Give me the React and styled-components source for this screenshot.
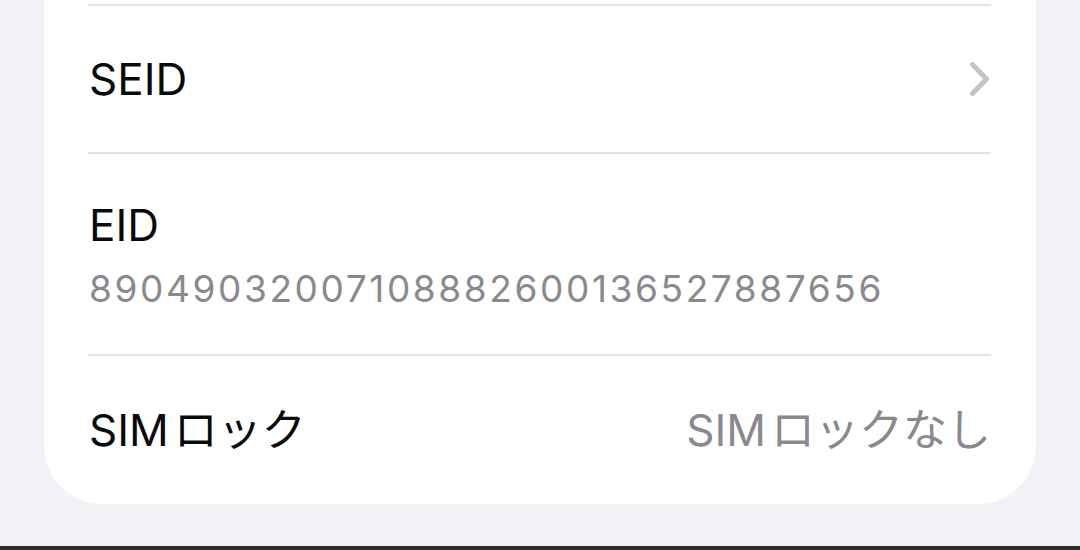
import React from 'react'
import styled, { createGlobalStyle } from 'styled-components'

const Global = createGlobalStyle`
  html, body {
    margin: 0;
    padding: 0;
    background: #f2f2f7;
  }
  body {
    font-family: Inter, "Noto Sans CJK JP", sans-serif;
    -webkit-font-smoothing: antialiased;
  }
`

const Page = styled.div`
  width: 1080px;
  height: 550px;
  display: flex;
  flex-direction: column;
  overflow: hidden;
  background: #f2f2f7;
`

const Scroll = styled.div`
  flex: 1;
  padding: 0 44px;
`

const Card = styled.div`
  background: #fff;
  padding-top: 4px;
  border-radius: 0 0 58px 58px;
`

const Row = styled.div`
  padding: 0 45px 0 44px;
`

const Inner = styled.div`
  border-top: 2px solid #e4e4e7;
  height: ${p => p.$h}px;
  box-sizing: border-box;
  display: flex;
  flex-direction: ${p => (p.$stacked ? 'column' : 'row')};
  align-items: ${p => (p.$stacked ? 'flex-start' : 'center')};
  justify-content: ${p => (p.$stacked ? 'center' : 'space-between')};
  gap: ${p => (p.$stacked ? '18px' : '0')};
`

const Label = styled.span`
  font-size: 44px;
  line-height: 52px;
  color: ${p => (p.$muted ? '#8a8a8e' : '#0a0a0a')};
  padding-left: 1px;
`

const Latin = styled.span`
  margin-right: 5px;
`

const Digits = styled.span`
  font-size: 37px;
  line-height: 40px;
  color: #8a8a8e;
  letter-spacing: 2.6px;
  padding-left: 1px;
`

const Chevron = () => (
  <svg width="22" height="36" viewBox="0 0 22 36" fill="none">
    <path d="M3.5 3.5 L17.5 18 L3.5 32.5" stroke="#c4c4c7" strokeWidth="5" strokeLinecap="round" strokeLinejoin="round" />
  </svg>
)

const BottomBar = styled.div`
  height: 4px;
  background: #2c2c2e;
`

export default function App() {
  return (
    <Page>
      <Global />
      <Scroll>
        <Card>
          <Row>
            <Inner $h={148}>
              <Label>SEID</Label>
              <Chevron />
            </Inner>
          </Row>
          <Row>
            <Inner $h={202} $stacked>
              <Label>EID</Label>
              <Digits>89049032007108882600136527887656</Digits>
            </Inner>
          </Row>
          <Row>
            <Inner $h={150}>
              <Label><Latin>SIM</Latin>ロック</Label>
              <Label $muted><Latin>SIM</Latin>ロックなし</Label>
            </Inner>
          </Row>
        </Card>
      </Scroll>
      <BottomBar />
    </Page>
  )
}
